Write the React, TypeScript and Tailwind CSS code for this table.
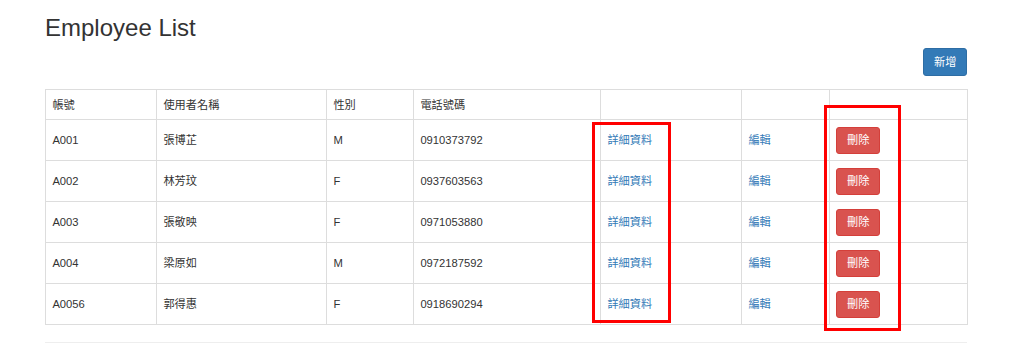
import React from 'react';

type Employee = {
    id: string;
    name: string;
    gender: string;
    phone: string;
};

const employees: Employee[] = [
    { id: 'A001', name: '張博芷', gender: 'M', phone: '0910373792' },
    { id: 'A002', name: '林芳玟', gender: 'F', phone: '0937603563' },
    { id: 'A003', name: '張敬映', gender: 'F', phone: '0971053880' },
    { id: 'A004', name: '梁原如', gender: 'M', phone: '0972187592' },
    { id: 'A0056', name: '郭得惠', gender: 'F', phone: '0918690294' },
];

const cell = 'border border-[#dddddd] px-[6.4px] py-[6.4px] align-middle text-left font-normal leading-[16px]';

const App: React.FC = () => {
    return (
        <div
            className="min-h-[350px] bg-white text-[#333333] text-[11.2px]"
            style={{ fontFamily: '"Liberation Sans", "Noto Sans CJK TC", sans-serif' }}
        >
            <div className="ml-[45px] w-[922px] pt-[15px]">
                <h2 className="text-[24px] leading-[26.4px] font-normal">Employee List</h2>

                <div className="flex justify-end mt-[7px]">
                    <button className="h-[27.2px] px-[9.6px] rounded-[3px] border border-[#2e6da4] bg-[#337ab7] text-white leading-[16px]">
                        新增
                    </button>
                </div>

                <div className="relative mt-[13.8px]">
                    <table className="w-full table-fixed border-collapse">
                        <colgroup>
                            <col className="w-[111px]" />
                            <col className="w-[170px]" />
                            <col className="w-[87px]" />
                            <col className="w-[187px]" />
                            <col className="w-[141px]" />
                            <col className="w-[88px]" />
                            <col className="w-[138px]" />
                        </colgroup>
                        <thead>
                            <tr className="h-[30px]">
                                <th className={cell}>帳號</th>
                                <th className={cell}>使用者名稱</th>
                                <th className={cell}>性別</th>
                                <th className={cell}>電話號碼</th>
                                <th className={cell}></th>
                                <th className={cell}></th>
                                <th className={cell}></th>
                            </tr>
                        </thead>
                        <tbody>
                            {employees.map(e => (
                                <tr key={e.id} className="h-[40.6px]">
                                    <td className={cell}>{e.id}</td>
                                    <td className={cell}>{e.name}</td>
                                    <td className={cell}>{e.gender}</td>
                                    <td className={cell}>{e.phone}</td>
                                    <td className={cell}>
                                        <a className="text-[#337ab7]">詳細資料</a>
                                    </td>
                                    <td className={cell}>
                                        <a className="text-[#337ab7]">編輯</a>
                                    </td>
                                    <td className={cell}>
                                        <button className="h-[27.2px] px-[9.6px] rounded-[3px] border border-[#d43f3a] bg-[#d9534f] text-white leading-[16px]">
                                            刪除
                                        </button>
                                    </td>
                                </tr>
                            ))}
                        </tbody>
                    </table>

                    {/* red annotation boxes */}
                    <div className="absolute left-[547px] top-[33px] w-[79px] h-[201px] border-[3px] border-[#ff0000]" />
                    <div className="absolute left-[779px] top-[16px] w-[77px] h-[226px] border-[3px] border-[#ff0000]" />
                </div>

                <div className="mt-[17px] border-t border-[#eeeeee]" />
            </div>
        </div>
    );
};

export default App;
